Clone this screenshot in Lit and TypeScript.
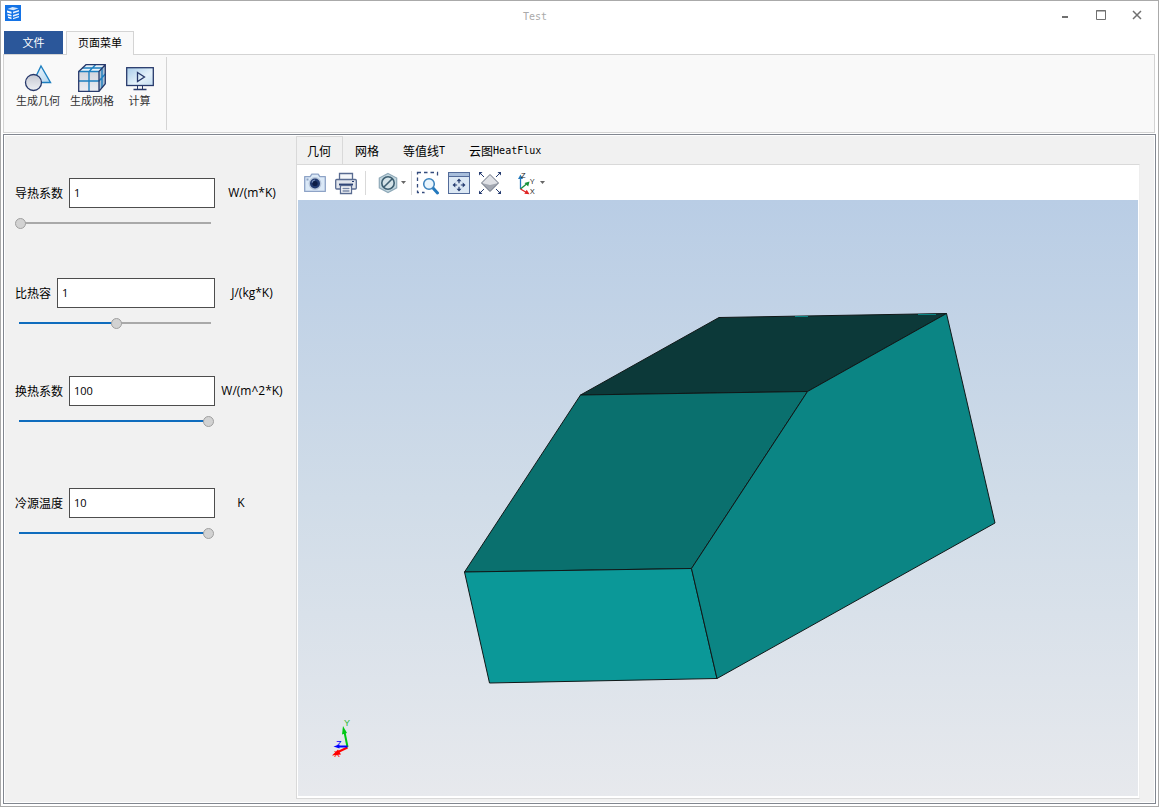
import { LitElement, html, svg, css, nothing } from "lit";
import { customElement, property, state } from "lit/decorators.js";

interface Quantity {
  id: string;
  label: string;
  value: string;
  unit: string;
  narrowUnit?: boolean;
  level: number;
}

const QUANTITIES: Quantity[] = [
  { id: "conductivity", label: "导热系数", value: "1", unit: "W/(m*K)", level: 0 },
  { id: "capacity", label: "比热容", value: "1", unit: "J/(kg*K)", level: 51 },
  { id: "transfer", label: "换热系数", value: "100", unit: "W/(m^2*K)", level: 100 },
  { id: "sink", label: "冷源温度", value: "10", unit: "K", narrowUnit: true, level: 100 },
];

const VIEW_TABS = [
  { cjk: "几何", latin: "" },
  { cjk: "网格", latin: "" },
  { cjk: "等值线", latin: "T" },
  { cjk: "云图", latin: "HeatFlux" },
];

const logo = html`<svg width="16" height="16" viewBox="0 0 16 16" aria-hidden="true">
  <rect width="16" height="16" fill="#1473e6" />
  <path d="m2.500 4 5-2 6 1.200-5 2z" fill="#d3e6fc" />
  <path d="m2 5.500 4.500 1.300v2L2 7.500zM2.500 8.800l4 1.200v1.600l-4-1.200zM3 11.500l3.500 1v1.700L3 13z" fill="#fff" />
  <path d="m8 6.800 6-1.800v1.500L8 8.500zM8 10l6-1.800v1.600l-6 1.900zM8 13l6-2v1.200l-6 2z" fill="#e9f2fe" />
</svg>`;

const geometryIcon = html`<svg width="28" height="28" viewBox="0 0 28 28" aria-hidden="true">
  <defs>
    <linearGradient id="tri" x2="1" y2="1"><stop offset="0" stop-color="#f4faff" /><stop offset="1" stop-color="#b4d6ee" /></linearGradient>
    <linearGradient id="ball" x2="0" y2="1"><stop offset="0" stop-color="#c5c8d2" /><stop offset="1" stop-color="#eef0f4" /></linearGradient>
  </defs>
  <path d="M17 2 26.500 18.500H9z" fill="url(#tri)" stroke="#1d7fc0" stroke-width="1.400" />
  <circle cx="9.500" cy="18.500" r="8" fill="url(#ball)" stroke="#27396b" stroke-width="1.300" />
</svg>`;

const meshIcon = html`<svg width="28" height="28" viewBox="0 0 28 28" aria-hidden="true">
  <defs><linearGradient id="cube" x2="0" y2="1"><stop offset="0" stop-color="#d2d5dd" /><stop offset="1" stop-color="#eceef3" /></linearGradient></defs>
  <path d="M.700 7.500 8 .700h19.300l-6.300 6.800z" fill="#e8f3fb" />
  <path d="M21 7.500 27.300.700v19L21 27.300z" fill="#a9bfd4" />
  <path d="M.700 7.500H21v19.800H.700z" fill="url(#cube)" />
  <path d="M.700 17H21l6.300-7M11 27V7.500L17.500.700M4.500 4H24v20M.700 7.500H21" fill="none" stroke="#1d7fc0" stroke-width="1.400" />
  <path d="M.700 7.500 8 .700h19.300v19L21 27.300H.700zM21 27.300V7.500L27.300.700" fill="none" stroke="#27396b" stroke-width="1.300" />
</svg>`;

const computeIcon = html`<svg width="28" height="28" viewBox="0 0 28 28" aria-hidden="true">
  <defs><linearGradient id="screen" x2="1" y2="1"><stop offset="0" stop-color="#a9cdea" /><stop offset=".600" stop-color="#e4f1fa" /><stop offset="1" stop-color="#c3def2" /></linearGradient></defs>
  <rect x=".700" y="3.700" width="26.600" height="17.800" fill="url(#screen)" stroke="#27396b" stroke-width="1.300" />
  <path d="M11.500 22v3.500M16.500 22v3.500" stroke="#27396b" />
  <path d="M7.500 25.500h13" stroke="#27396b" stroke-width="1.500" />
  <path d="M11.500 8.500 18.500 13l-7 4.500z" fill="none" stroke="#27396b" stroke-width="1.300" />
</svg>`;

const cameraIcon = html`<svg width="24" height="24" viewBox="0 0 24 24" aria-hidden="true">
  <path d="M1.700 5.600h5.500l1.600-2.400h6.400l1.600 2.400h5.500v14.800H1.700z" fill="#dbe9f7" stroke="#8ea3c6" stroke-width="1.300" stroke-linejoin="round" />
  <rect x="3.500" y="7.500" width="2" height="2" fill="#8ea3c6" />
  <circle cx="12" cy="12.500" r="6.400" fill="#b7c5da" />
  <circle cx="12" cy="12.500" r="5" fill="#213a70" />
  <circle cx="12" cy="12.500" r="2.600" fill="#0c1c45" />
  <path d="M9 11.500a3.500 3.500 0 0 1 3-2.500" fill="none" stroke="#7d93bd" stroke-width="1.200" />
</svg>`;

const printerIcon = html`<svg width="24" height="24" viewBox="0 0 24 24" aria-hidden="true">
  <path d="M5.500 8.500v-6h13v6" fill="#f5f7fa" stroke="#596b91" stroke-width="1.300" />
  <rect x="1.700" y="8.500" width="20.600" height="9.500" rx="1" fill="#e1e5ec" stroke="#596b91" stroke-width="1.300" />
  <path d="M5 13.500h14" stroke="#243b70" stroke-width="1.800" />
  <path d="M18 10.500h2" stroke="#243b70" />
  <path d="M6.500 14.500h11v8h-11z" fill="#fff" stroke="#596b91" stroke-width="1.300" />
  <path d="M8.500 17.500h7M8.500 20h7" stroke="#7787a6" stroke-width="1.300" />
</svg>`;

const hiddenIcon = html`<svg width="20" height="24" viewBox="0 0 20 24" aria-hidden="true">
  <path d="M10 2.500 18.700 7v9.800L10 21.500 1.300 16.800V7z" fill="#c3d7df" stroke="#8fa9b8" stroke-width="1.200" />
  <circle cx="10" cy="12" r="6.200" fill="#d5e3e8" stroke="#3e5f72" stroke-width="1.600" />
  <path d="M5.700 16.300 14.300 7.700" stroke="#3e5f72" stroke-width="1.600" />
</svg>`;

const zoomIcon = html`<svg width="24" height="24" viewBox="0 0 24 24" aria-hidden="true">
  <path d="M1.500 1.500h20v20h-20z" fill="none" stroke="#344b7d" stroke-width="1.300" stroke-dasharray="3.500 3" />
  <path d="M6 7h17v17H9z" fill="#fff" />
  <path d="m17 17 4.500 5" stroke="#2479bd" stroke-width="3" stroke-linecap="round" />
  <circle cx="13" cy="13" r="5.300" fill="#e9f5fd" stroke="#3b82bd" stroke-width="1.500" />
</svg>`;

const fitIcon = html`<svg width="24" height="24" viewBox="0 0 24 24" aria-hidden="true">
  <rect x="1.500" y="1.500" width="21" height="21" fill="#dce8f4" stroke="#536b99" />
  <path d="M2 2h20v3H2z" fill="#a8bedb" />
  <path d="M1.500 5.500h21" stroke="#536b99" />
  <g fill="#273d71"><path d="m12 7.500 2.500 2.800h-5zM12 20.500l2.500-2.800h-5zM5.500 14l2.800-2.500v5zM18.500 14l-2.800-2.500v5z" /></g>
  <path d="M12 10v2.200M12 15.800V18M8 14h2.200M13.800 14H16" stroke="#273d71" stroke-width="1.200" />
</svg>`;

const extentsIcon = html`<svg width="24" height="24" viewBox="0 0 24 24" aria-hidden="true">
  <path d="m12 3.500 8.500 8.500-8.500 8.500L3.500 12z" fill="#dfe1e6" />
  <path d="M3.500 12 12 14l8.500-2L12 20.500z" fill="#a3a8b2" />
  <path d="m12 3.500 8.500 8.500-8.500 8.500L3.500 12z" fill="none" stroke="#697181" />
  <g stroke="#273d71"><path d="m2 2 4 4M22 2l-4 4M2 22l4-4M22 22l-4-4" /></g>
  <path d="M1 1h3.500L1 4.500zM23 1h-3.500L23 4.500zM1 23h3.500L1 19.500zM23 23h-3.500l3.500-3.500z" fill="#273d71" />
</svg>`;

const axesIcon = html`<svg width="20" height="28" viewBox="0 0 20 28" aria-hidden="true">
  <path d="M3.500 20V9" stroke="#2479bd" stroke-width="1.300" /><path d="M3.500 5.500 6 10H1z" fill="#2479bd" />
  <path d="m3.500 20 6-5" stroke="#18913b" stroke-width="1.300" /><path d="m12.500 12.500-1.300 5L7.500 14z" fill="#18913b" />
  <path d="m3.500 20 6 3.500" stroke="#e02424" stroke-width="1.300" /><path d="m12.500 25.200-5.200-.400 2.400-4z" fill="#e02424" />
  <g class="axis-names"><text x="4" y="9">Z</text><text x="13" y="15">Y</text><text x="13" y="25">X</text></g>
</svg>`;

/** Labelled value box with its unit and a slider underneath. */
@customElement("quantity-field")
export class QuantityField extends LitElement {
  @property({ attribute: false }) quantity!: Quantity;
  @state() private level = 0;

  static styles = css`
    :host { display: block; }
    .row { display: flex; align-items: center; }
    .entry { display: flex; align-items: center; gap: 6px; width: 200px; }
    label, .unit { font-size: 12px; line-height: 16px; white-space: nowrap; color: #000; }
    .box {
      flex: 1; min-width: 0; height: 30px; box-sizing: border-box; margin: 0;
      border: 1px solid #4d4d4d; background: #fff; padding: 0 4px 2px; outline: none;
      font: 11px "Open Sans", "Noto Sans", sans-serif; color: #000;
    }
    .unit { width: 74px; text-align: center; font-family: "Open Sans", "Noto Sans", sans-serif; }
    .unit.narrow { width: 52px; }
    .slider {
      display: block; appearance: none; -webkit-appearance: none;
      width: 199px; height: 12px; margin: 9px 0 0; outline: none;
      background:
        linear-gradient(#0f6cbd, #0f6cbd) 4px 5px / calc((100% - 12px) * var(--level)) 2px no-repeat,
        linear-gradient(#a9a9a9, #a9a9a9) 4px 5px / calc(100% - 7px) 2px no-repeat;
    }
    .slider::-webkit-slider-thumb {
      -webkit-appearance: none; box-sizing: border-box; width: 11px; height: 11px;
      border: 1px solid #a0a0a0; border-radius: 50%; background: #d2d2d2;
    }
  `;

  willUpdate(changed: Map<string, unknown>) {
    if (changed.has("quantity")) this.level = this.quantity.level;
  }

  render() {
    const q = this.quantity;
    return html`
      <div class="row">
        <div class="entry">
          <label for=${q.id}>${q.label}</label>
          <input class="box" id=${q.id} type="text" .value=${q.value} />
        </div>
        <span class="unit ${q.narrowUnit ? "narrow" : ""}">${q.unit}</span>
      </div>
      <input class="slider" type="range" min="0" max="100" aria-label=${q.label}
        .value=${String(this.level)} style="--level: ${this.level / 100}"
        @input=${(e: Event) => (this.level = Number((e.target as HTMLInputElement).value))} />
    `;
  }
}

/** Shaded solid with the orientation triad in the lower left corner. */
@customElement("model-view")
export class ModelView extends LitElement {
  static styles = css`
    :host { display: block; min-height: 0; background: linear-gradient(#b9cde5, #d0dce8 50%, #e7e9ed); }
    .scene { display: block; width: 100%; height: 100%; }
    .edges { stroke: #101818; stroke-width: 1; stroke-linejoin: round; }
    .triad { font: 9px "Liberation Sans", Arial, sans-serif; }
  `;

  private faces = [
    { points: "719,317.500 946.500,313.500 807.500,391.500 580.500,395", fill: "#0c3939" },
    { points: "580.500,395 807.500,391.500 691.500,568.500 464.500,572", fill: "#0a706e" },
    { points: "464.500,572 691.500,568.500 717,678.500 489.500,683", fill: "#0b9898" },
    { points: "807.500,391.500 946.500,313.500 995,523 717,678.500 691.500,568.500", fill: "#0b8584" },
  ];

  render() {
    return html`<svg class="scene" viewBox="298 200 840 596" role="img" aria-label="几何">
      <g class="edges">${this.faces.map((f) => svg`<polygon points=${f.points} fill=${f.fill} />`)}</g>
      <path d="M795 316.500h13M918 314.500h18" stroke="#0b8584" />
      <g class="triad">
        <path d="M347.500 747 344.500 732" stroke="#00c814" stroke-width="2" />
        <path d="m343 726 4 7-5 1.500z" fill="#00c814" />
        <path d="M347.500 747.500 338 752" stroke="#f00" stroke-width="2" />
        <path d="m332 755.500 6-6 3 5z" fill="#f00" />
        <path d="M347.500 746.500H338" stroke="#00f" stroke-width="2" />
        <path d="m333.500 746.500 6-2v4z" fill="#00f" />
        <text x="344" y="726" fill="#2eb83a">Y</text>
        <text x="336" y="747" fill="#00f">Z</text>
        <text x="334" y="757" fill="#f00">X</text>
      </g>
    </svg>`;
  }
}

@customElement("app-root")
export class AppRoot extends LitElement {
  @state() private current = 0;

  static styles = css`
    :host {
      display: flex; flex-direction: column; box-sizing: border-box; height: 100vh;
      border: 1px solid #aaa; background: #fff; color: #000;
      font: 12px/16px "Noto Sans CJK SC", sans-serif;
    }
    button { margin: 0; padding: 0; border: 0; background: none; font: inherit; color: inherit; }
    svg { display: block; flex: none; }
    .latin { font-family: "DejaVu Sans Mono", monospace; font-size: 10px; }

    .titlebar { display: grid; grid-template-columns: 36px 1fr 108px; height: 30px; padding: 0 3px 0 4px; }
    .logo { padding-top: 4px; }
    .title { margin: 0; padding: 8px 18px 0 0; text-align: center; font-weight: normal; color: #aaa; }
    .window-buttons { display: grid; grid-template-columns: repeat(3, 36px); height: 27px; }
    .window-buttons button { display: grid; place-items: center; }

    .ribbon-tabs { display: flex; gap: 3px; padding-left: 3px; height: 24px; font-size: 11px; }
    .ribbon-tabs button { white-space: nowrap; padding-bottom: 2px; }
    .ribbon-tabs .file { width: 59px; height: 23px; background: #2b579a; color: #fff; }
    .ribbon-tabs .page { width: 68px; padding-bottom: 3px; border: 1px solid #d4d4d4; border-bottom: 0; background: #f9f9f9; position: relative; }
    .ribbon { display: flex; height: 77px; margin: -1px 3px 0 2px; border: 1px solid #d4d4d4; background: #f9f9f9; }
    .group { display: flex; margin: 2px 0; padding: 7px 6px 0 7px; border-right: 1px solid #d4d4d4; }
    .command { display: flex; flex-direction: column; align-items: center; width: 54px; font-size: 11px; color: #333; }
    .command.short { width: 41px; }

    .frame {
      flex: 1; display: flex; min-height: 0; margin: 1px 2px 2px 2px; box-sizing: border-box;
      border: 1px solid #828790; background: #f1f1f1; box-shadow: inset 0 0 0 1px #fff;
    }
    .parameters {
      display: grid; grid-template-rows: 100px 98px 112px auto; align-content: start;
      box-sizing: border-box; width: 292px; flex: none; padding: 43px 0 0 11px;
    }
    .results { flex: 1; display: flex; flex-direction: column; min-width: 0; margin: 1px 15px 4px 0; }
    .tabs { display: flex; height: 28px; }
    .tabs button { display: flex; align-items: center; padding: 2px 12px 0; white-space: nowrap; }
    .tabs .current { padding: 1px 11px 0 10px; border: 1px solid #d9d9d9; border-bottom: 0; }
    .pane {
      flex: 1; display: flex; flex-direction: column; min-height: 0;
      border: 1px solid #d9d9d9; border-right-color: #eee; background: #fff; padding: 0 1px 2px 1px;
    }
    .toolbar { display: flex; align-items: center; flex: none; height: 35px; padding-left: 5px; }
    .toolbar button { display: flex; align-items: center; gap: 3px; margin-right: 7px; }
    .toolbar .menu { margin-right: 5px; }
    .divider { width: 1px; height: 24px; background: #d9d9d9; margin-right: 12px; }
    .divider.tight { margin-right: 4px; }
    .axes-slot { padding-left: 8px; }
    .axis-names { font: 8px "Open Sans", sans-serif; fill: #222; }
    model-view { flex: 1; }
  `;

  private command(label: string, icon: unknown, short = false) {
    return html`<button class="command ${short ? "short" : ""}">${icon}<span>${label}</span></button>`;
  }

  private tool(label: string, icon: unknown, menu = false) {
    return html`<button class=${menu ? "menu" : "tool"} aria-label=${label}>${icon}
      ${menu ? html`<svg width="5" height="3" viewBox="0 0 5 3"><path d="M0 0h5L2.500 3z" fill="#666" /></svg>` : nothing}
    </button>`;
  }

  render() {
    return html`
      <header class="titlebar">
        <div class="logo">${logo}</div>
        <h1 class="title latin">Test</h1>
        <div class="window-buttons">
          <button aria-label="Minimize"><svg width="10" height="10" viewBox="0 0 10 10"><path d="M2 7h6" stroke="#707070" stroke-width="2" /></svg></button>
          <button aria-label="Maximize"><svg width="10" height="10" viewBox="0 0 10 10"><path d="M.500.500h9v9h-9zM0 1h10" fill="none" stroke="#707070" /></svg></button>
          <button aria-label="Close"><svg width="10" height="10" viewBox="0 0 10 10"><path d="m1 1 8 8M9 1 1 9" stroke="#707070" stroke-width="1.500" /></svg></button>
        </div>
      </header>
      <nav class="ribbon-tabs">
        <button class="file">文件</button>
        <button class="page">页面菜单</button>
      </nav>
      <section class="ribbon">
        <div class="group">
          ${this.command("生成几何", geometryIcon)}
          ${this.command("生成网格", meshIcon)}
          ${this.command("计算", computeIcon, true)}
        </div>
      </section>
      <main class="frame">
        <section class="parameters">
          ${QUANTITIES.map((q) => html`<quantity-field .quantity=${q}></quantity-field>`)}
        </section>
        <section class="results">
          <div class="tabs" role="tablist">
            ${VIEW_TABS.map((t, i) => html`<button role="tab" aria-selected=${i === this.current}
              class=${i === this.current ? "current" : ""} @click=${() => (this.current = i)}
              >${t.cjk}${t.latin ? html`<span class="latin">${t.latin}</span>` : nothing}</button>`)}
          </div>
          <div class="pane">
            <div class="toolbar" role="toolbar">
              ${this.tool("Snapshot", cameraIcon)}
              ${this.tool("Print", printerIcon)}
              <span class="divider"></span>
              ${this.tool("Visibility", hiddenIcon, true)}
              <span class="divider tight"></span>
              ${this.tool("Zoom to box", zoomIcon)}
              ${this.tool("Fit window", fitIcon)}
              ${this.tool("Zoom extents", extentsIcon)}
              <div class="axes-slot">${this.tool("View direction", axesIcon, true)}</div>
            </div>
            <model-view></model-view>
          </div>
        </section>
      </main>
    `;
  }
}
